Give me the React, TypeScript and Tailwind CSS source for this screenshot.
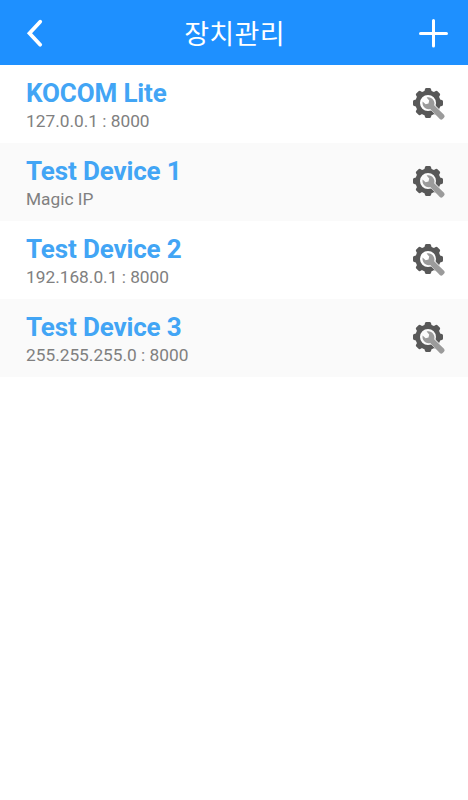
import React from 'react';

interface Device {
  name: string;
  address: string;
}

const DEVICES: Device[] = [
  { name: 'KOCOM Lite', address: '127.0.0.1 : 8000' },
  { name: 'Test Device 1', address: 'Magic IP' },
  { name: 'Test Device 2', address: '192.168.0.1 : 8000' },
  { name: 'Test Device 3', address: '255.255.255.0 : 8000' },
];

const TEETH = [0, 45, 90, 135, 180, 225, 270, 315];

const SettingsIcon: React.FC = () => (
  <svg width="34" height="34" viewBox="0 0 34 34" fill="none">
    <circle cx="16" cy="16" r="10.3" stroke="#585858" strokeWidth="4.6" />
    {TEETH.map((angle) => (
      <path
        key={angle}
        d="M12.2 5L13 2.1Q13.3 1 14.4 1H17.6Q18.7 1 19 2.1L19.8 5Z"
        fill="#585858"
        transform={`rotate(${angle} 16 16)`}
      />
    ))}
    <path d="M18.4 22.7L23 18.1L31 26L26.5 30.7Z" fill="#fff" />
    <path
      d="M14.6 10.6L17.2 13.6L16.5 16.6L13.6 17.2L10.6 14.6C9.9 18.6 12.6 22.2 16.5 22.2C17.2 22.2 17.7 22.1 18.2 21.9L27.8 32Q29.3 33.4 30.7 32L32 30.7Q33.4 29.2 32 27.8L22.2 18.2C22.8 16.2 22.4 14.4 21.3 12.9C19.7 10.7 17 9.9 14.6 10.6Z"
      fill="#9b9b9b"
    />
  </svg>
);

const Header: React.FC = () => (
  <header className="flex h-[65px] items-center justify-between bg-[#1e90ff] text-white">
    <button className="pl-[26px]" aria-label="Back">
      <svg width="18" height="30" viewBox="0 0 18 30" fill="none">
        <path d="M14.2 3.7L3.5 15.2L14.2 26.7" stroke="currentColor" strokeWidth="3.8" strokeLinecap="round" />
      </svg>
    </button>
    <h1 className="pt-[6px] pl-[6px] text-[27px] leading-none font-normal tracking-[0.3px]">장치관리</h1>
    <button className="pr-[19px]" aria-label="Add device">
      <svg width="30" height="30" viewBox="0 0 30 30" fill="none">
        <path d="M14.5 2.5V28M1.5 15.5H27.5" stroke="currentColor" strokeWidth="3" strokeLinecap="round" />
      </svg>
    </button>
  </header>
);

const DeviceRow: React.FC<{ device: Device }> = ({ device }) => (
  <li className="flex h-[78px] items-center justify-between pr-[22px] pl-[26px] even:bg-[#fafafa]">
    <div className="pt-1">
      <h2 className="text-[26px] leading-[30px] font-bold tracking-[-0.14px] text-[#42a5f5]">{device.name}</h2>
      <p className="text-[17.3px] leading-[26px] text-[#808080]">{device.address}</p>
    </div>
    <button aria-label="Device settings">
      <SettingsIcon />
    </button>
  </li>
);

export default function App() {
  return (
    <div className="min-h-screen bg-white font-['Roboto','Noto_Sans_CJK_KR',sans-serif]">
      <Header />
      <ul>
        {DEVICES.map((device) => (
          <DeviceRow key={device.name} device={device} />
        ))}
      </ul>
    </div>
  );
}
